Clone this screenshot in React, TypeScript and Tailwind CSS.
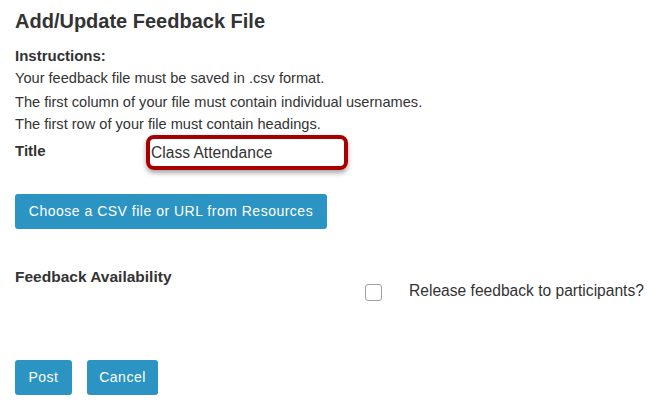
export default function App() {
  return (
    <div className="w-[661px] h-[408px] bg-white text-[#333333] px-[15px] pt-[8px] font-['Liberation_Sans',Arial,sans-serif] overflow-hidden">
      <h1 className="text-[20px] font-bold leading-[24px] mt-[1px]">Add/Update Feedback File</h1>

      <div className="mt-[13px] text-[14.6px] leading-[23px]">
        <div className="font-bold text-[15px] leading-[20px]">Instructions:</div>
        <div className="mt-[1px]">Your feedback file must be saved in .csv format.</div>
        <div className="leading-[25px]">The first column of your file must contain individual usernames.</div>
        <div className="leading-[18px]">The first row of your file must contain headings.</div>
      </div>

      <div className="flex items-start mt-[7px]">
        <label className="w-[132px] font-bold text-[15px] leading-[20px] pt-[1px]">Title</label>
        <div className="w-[202px] h-[35px] border-[4px] border-[#a80000] rounded-[8px] shadow-[0_3px_5px_rgba(0,0,0,0.35)] flex items-center pl-[1px] -mt-[5px] ml-[-1px]">
          <span className="text-[15.6px] leading-[20px]">Class Attendance</span>
        </div>
      </div>

      <button className="mt-[24px] h-[35px] w-[312px] bg-[#2b94c3] text-white rounded-[3px] text-[14px] tracking-[0.5px] flex items-center justify-center">
        Choose a CSV file or URL from Resources
      </button>

      <div className="flex mt-[38px]">
        <div className="w-[350px] font-bold text-[15.5px] leading-[20px]">Feedback Availability</div>
        <div className="flex items-center mt-[15px]">
          <span className="w-[17px] h-[17px] border border-[#a0a0a0] rounded-[3px] bg-white" />
          <span className="ml-[27px] text-[15.6px] leading-[20px] -translate-y-[1px]">Release feedback to participants?</span>
        </div>
      </div>

      <div className="flex gap-[15px] mt-[58px]">
        <button className="h-[35px] w-[57px] bg-[#2b94c3] text-white rounded-[3px] text-[14px] tracking-[0.5px]">Post</button>
        <button className="h-[35px] w-[71px] bg-[#2b94c3] text-white rounded-[3px] text-[14px] tracking-[0.5px]">Cancel</button>
      </div>
    </div>
  );
}
